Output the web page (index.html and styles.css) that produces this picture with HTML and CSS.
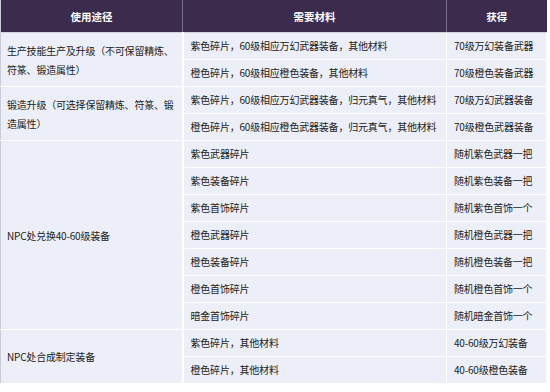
FILE: index.html
```html
<!DOCTYPE html>
<html lang="zh">
<head>
<meta charset="utf-8">
<link rel="stylesheet" href="styles.css">
</head>
<body>
<table class="tbl">
  <colgroup>
    <col class="c1"><col class="c2"><col class="c3">
  </colgroup>
  <thead>
    <tr><th>使用途径</th><th>需要材料</th><th>获得</th></tr>
  </thead>
  <tbody>
    <tr><td rowspan="2" class="way">生产技能生产及升级（不可保留精炼、符篆、锻造属性）</td><td>紫色碎片，60级相应万幻武器装备，其他材料</td><td>70级万幻装备武器</td></tr>
    <tr><td>橙色碎片，60级相应橙色装备，其他材料</td><td>70级橙色装备武器</td></tr>
    <tr><td rowspan="2" class="way">锻造升级（可选择保留精炼、符篆、锻造属性）</td><td>紫色碎片，60级相应万幻武器装备，归元真气，其他材料</td><td>70级万幻武器装备</td></tr>
    <tr><td>橙色碎片，60级相应橙色武器装备，归元真气，其他材料</td><td>70级橙色武器装备</td></tr>
    <tr><td rowspan="7" class="way">NPC处兑换40-60级装备</td><td>紫色武器碎片</td><td>随机紫色武器一把</td></tr>
    <tr><td>紫色装备碎片</td><td>随机紫色装备一把</td></tr>
    <tr><td>紫色首饰碎片</td><td>随机紫色首饰一个</td></tr>
    <tr><td>橙色武器碎片</td><td>随机橙色武器一把</td></tr>
    <tr><td>橙色装备碎片</td><td>随机橙色装备一把</td></tr>
    <tr><td>橙色首饰碎片</td><td>随机橙色首饰一个</td></tr>
    <tr><td>暗金首饰碎片</td><td>随机暗金首饰一个</td></tr>
    <tr><td rowspan="2" class="way">NPC处合成制定装备</td><td>紫色碎片，其他材料</td><td>40-60级万幻装备</td></tr>
    <tr><td>橙色碎片，其他材料</td><td>40-60级橙色装备</td></tr>
  </tbody>
</table>
</body>
</html>
```

FILE: styles.css
```css
html, body {
  margin: 0;
  padding: 0;
  background: #ffffff;
}
body {
  font-family: "Noto Sans CJK SC", "Liberation Serif", sans-serif;
  font-size: 10px;
  letter-spacing: -0.2px;
  color: #222222;
}
.tbl {
  width: 546px;
  border-collapse: collapse;
  table-layout: fixed;
  border-left: 1px solid #c9cbd6;
  background: #eceff7;
}
.c1 { width: 182px; }
.c2 { width: 264px; }
.c3 { width: 100px; }
.tbl th {
  height: 32px;
  padding: 0;
  background: #3b2b4c;
  color: #ffffff;
  font-size: 10.5px;
  font-weight: bold;
  letter-spacing: 0;
  text-align: center;
  border-right: 1px solid #7a7088;
  border-bottom: 1px solid #d0d3de;
}
.tbl th:last-child { border-right: none; }
.tbl td {
  height: 26px;
  padding: 0 4px 0 7px;
  line-height: 18px;
  border-bottom: 1px solid #ffffff;
  border-right: 1px solid #ffffff;
  vertical-align: middle;
  white-space: nowrap;
}
.tbl td.way {
  white-space: normal;
  padding-left: 6px;
  padding-right: 5px;
  line-height: 19px;
  border-right: 2px solid #ffffff;
}
```
